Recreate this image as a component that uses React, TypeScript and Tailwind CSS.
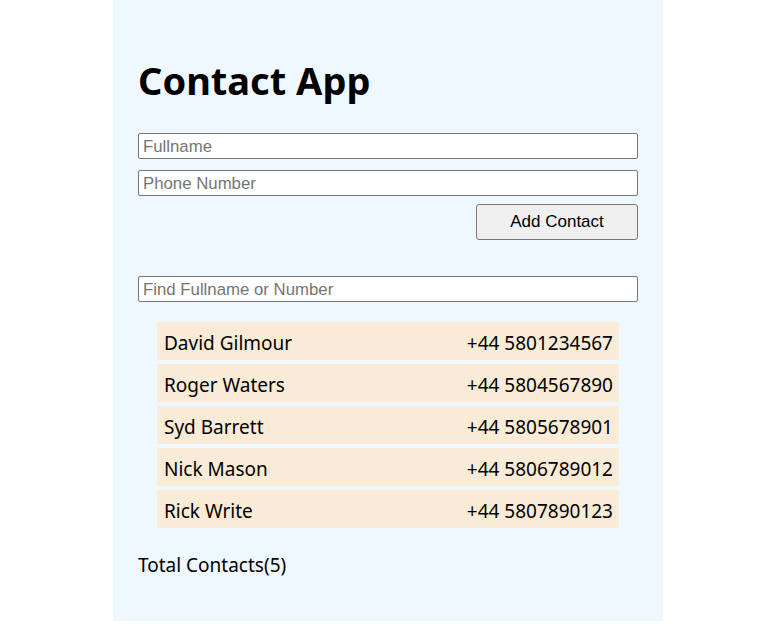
const contacts = [
  { name: 'David Gilmour', phone: '+44 5801234567' },
  { name: 'Roger Waters', phone: '+44 5804567890' },
  { name: 'Syd Barrett', phone: '+44 5805678901' },
  { name: 'Nick Mason', phone: '+44 5806789012' },
  { name: 'Rick Write', phone: '+44 5807890123' },
];

const inputCls =
  "block w-full h-[26px] border border-[#767676] rounded-[2px] bg-white px-[4px] pt-px text-[16.8px] text-black placeholder:text-[#757575] font-['Liberation_Sans',Arial,sans-serif] outline-none";

const App = () => {
  return (
    <div className="w-full min-h-[640px] bg-white flex justify-center items-start pr-px">
      <div className="w-[550px] bg-[#f0f8ff] px-[25px] pt-[56px] pb-[42px] font-['Noto_Sans','Open_Sans',sans-serif] text-black">
        <h1 className="text-[38px] leading-[48px] font-bold">Contact App</h1>

        <div className="mt-[29px] flex flex-col gap-[11px]">
          <input className={inputCls} placeholder="Fullname" />
          <input className={inputCls} placeholder="Phone Number" />
        </div>
        <div className="mt-[8px] flex justify-end">
          <button className="w-[162px] h-[36px] border border-[#767676] rounded-[3px] bg-[#efefef] text-[17px] text-black font-['Liberation_Sans',Arial,sans-serif]">
            Add Contact
          </button>
        </div>

        <div className="mt-[36px]">
          <input className={inputCls} placeholder="Find Fullname or Number" />
        </div>

        <ul className="mt-[20px] mx-[19px] flex flex-col gap-[4px]">
          {contacts.map((c) => (
            <li
              key={c.phone}
              className="h-[38px] bg-[#faebd7] pl-[7px] pr-[6px] pt-[4px] flex items-center justify-between text-[19px]"
            >
              <span>{c.name}</span>
              <span>{c.phone}</span>
            </li>
          ))}
        </ul>

        <p className="mt-[23px] text-[19px] leading-[28px]">Total Contacts({contacts.length})</p>
      </div>
    </div>
  );
};

export default App;
